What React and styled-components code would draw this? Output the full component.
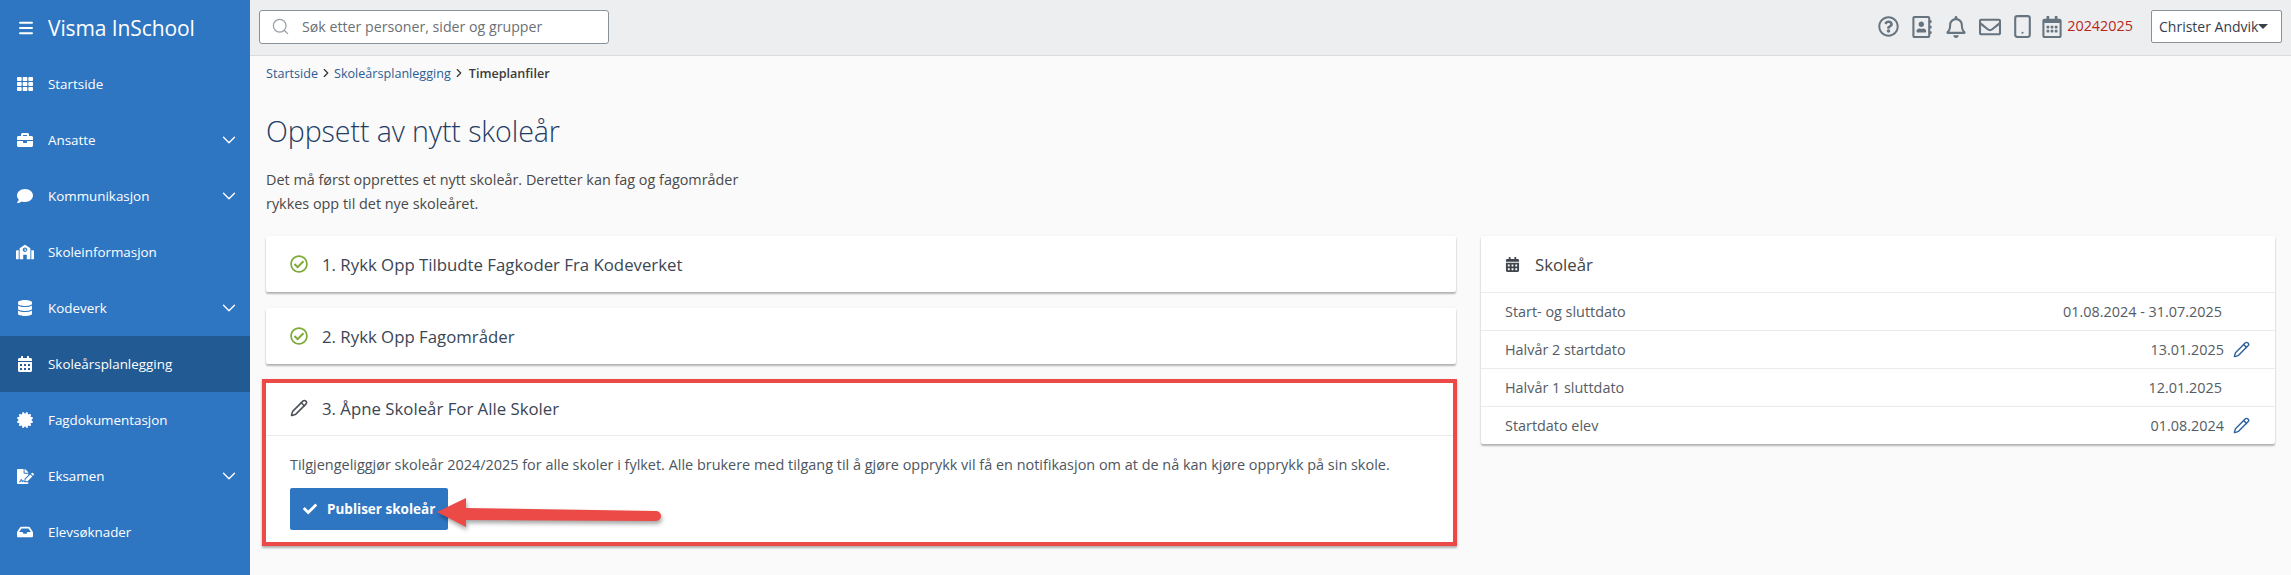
import React from "react";
import styled, { createGlobalStyle } from "styled-components";
import {
  FaTh, FaBriefcase, FaComment, FaDatabase, FaCalendarAlt, FaCertificate, FaFileSignature, FaInbox, FaSchool,
  FaRegQuestionCircle, FaRegAddressBook, FaRegBell, FaRegEnvelope, FaRegCalendarAlt, FaRegCheckCircle, FaCheck,
} from "react-icons/fa";
import { ChevronDown, ChevronRight, Menu, Search, Pencil, Smartphone } from "lucide-react";

const Global = createGlobalStyle`
  html, body { margin: 0; padding: 0; height: 100%; overflow: hidden; background: #fafafa; }
  body { font-family: "Open Sans", "Noto Sans", sans-serif; font-size: 14.4px; color: #494949; }
  * { box-sizing: border-box; }
`;

const Shell = styled.div`display: flex; width: 2291px; height: 575px; overflow: hidden;`;

const Sidebar = styled.nav`width: 250px; flex: none; background: #2f76c2; color: #fff;`;
const Brand = styled.div`
  height: 56px; display: flex; align-items: center; gap: 13px; padding-left: 17px;
  font-size: 21px; letter-spacing: -0.1px;
`;
const NavItem = styled.div`
  height: 56px; display: flex; align-items: center; position: relative; font-size: 13.4px;
  background: ${(p) => (p.$active ? "#225a94" : "transparent")};
`;
const NavIcon = styled.span`width: 48px; flex: none; display: flex; justify-content: center; padding-left: 2px; font-size: ${(p) => p.$s || 16}px;`;
const NavLabel = styled.span`flex: 1;`;
const NavChevron = styled.span`display: flex; width: 32px;`;

const Body = styled.div`flex: 1; min-width: 0; display: flex; flex-direction: column;`;
const Topbar = styled.header`
  height: 56px; flex: none; display: flex; align-items: center; background: #edeef0;
  border-bottom: 1px solid #d9dbdd; padding: 0 9px 2px 9px;
`;
const SearchBox = styled.div`
  width: 350px; height: 34px; background: #fff; border: 1px solid #8a9299; border-radius: 3px;
  display: flex; align-items: center; padding-left: 11px; gap: 12px; color: #6b7075; font-size: 14.2px;
`;
const TopIcons = styled.div`margin-left: auto; display: flex; align-items: center; color: #66747f;`;
const TopIcon = styled.span`display: flex; justify-content: center; width: ${(p) => p.$w || 34}px; font-size: ${(p) => p.$s || 22}px;`;
const YearText = styled.span`color: #b8271c; font-size: 14.4px; margin: 0 18px 0 0; line-height: 1;`;
const UserButton = styled.button`
  width: 131px; height: 33px; padding: 0 0 0 7px; background: #fff; border: 1px solid #8a9299; border-radius: 2px;
  font: 14px "Open Sans", sans-serif; color: #33404d; display: flex; align-items: center; white-space: nowrap;
`;
const Caret = styled.span`
  width: 0; height: 0; border-left: 5px solid transparent; border-right: 5px solid transparent;
  border-top: 5px solid #3a4048;
`;

const Main = styled.main`flex: 1; padding: 0 16px; background: #fafafa; min-height: 0;`;
const Crumbs = styled.div`
  display: flex; align-items: center; height: 16px; margin-top: 9px; font-size: 12.6px; color: #2d5c94;
`;
const CrumbSep = styled.span`display: flex; width: 15px; margin: 0 0 0 1px; color: #333;`;
const CrumbCurrent = styled.span`color: #3c3c3c; font-weight: 600; margin-left: 2px;`;
const Crumb = styled.span``;

const Title = styled.h1`
  margin: 30px 0 0; font-size: 28.6px; font-weight: 300; line-height: 40px; color: #1f3d66; letter-spacing: -0.1px;
`;
const Intro = styled.p`margin: 17px 0 0; font-size: 14.4px; line-height: 24px; color: #494949;`;

const Columns = styled.div`
  display: grid; grid-template-columns: 1190px 794px; column-gap: 25px; margin-top: 20px; align-items: start;
`;
const Stack = styled.div`display: flex; flex-direction: column;`;
const Card = styled.section`
  background: #fff; border-radius: 2px; box-shadow: 0 2px 2px rgba(0,0,0,.28), 0 0 3px rgba(0,0,0,.05);
  margin-bottom: ${(p) => p.$mb || 0}px;
`;
const HighlightCard = styled(Card)`
  position: relative; border: 4px solid #eb4a46; border-radius: 0; margin: -1px -1px 0 -4px; height: 167px;
`;
const CardHead = styled.div`
  display: flex; align-items: center; height: ${(p) => p.$h || 56}px; padding-left: ${(p) => p.$pl || 24}px;
  padding-bottom: ${(p) => (p.$line ? 2 : 0)}px;
  font-size: 16.8px; font-weight: 500; color: #3b4654; gap: ${(p) => p.$gap || 14}px;
  border-bottom: ${(p) => (p.$line ? "1px solid #ebebeb" : "0")};
`;
const CheckIcon = styled.span`display: flex; color: #7cab35; font-size: 18px; width: 18px;`;
const EditIcon = styled.span`display: flex; color: #4a4f55; width: 18px;`;
const CardBody = styled.div`padding: 19px 24px 0;`;
const BodyText = styled.p`margin: 0; font-size: 14.45px; line-height: 20px; color: #4c5560; white-space: nowrap;`;
const PublishButton = styled.button`
  margin-top: 13px; height: 42px; width: 158px; background: #2f76c2; color: #fff; border: 0; border-radius: 2px;
  font: 700 13.5px "Open Sans", sans-serif; display: flex; align-items: center; gap: 10px; padding-left: 13px;
`;
const Arrow = styled.svg`position: absolute; left: 164px; top: 106px; overflow: visible; filter: drop-shadow(1px 3px 2px rgba(0,0,0,.35));`;

const YearHead = styled(CardHead)`font-weight: 500; color: #444;`;
const YearIcon = styled.span`display: flex; color: #3e454d; font-size: 15px;`;
const Row = styled.div`
  height: 38px; display: flex; align-items: center; justify-content: space-between;
  padding: 0 25px 0 24px; font-size: 14.4px; color: #555c64; border-top: 1px solid #ebebeb;
`;
const RowValue = styled.span`display: flex; align-items: center; gap: 9px; margin-right: ${(p) => (p.$edit ? 0 : 28)}px;`;
const PenLink = styled.span`display: flex; color: #2d619e;`;

const nav = [
  [FaTh, "Startside"], [FaBriefcase, "Ansatte", true], [FaComment, "Kommunikasjon", true], [FaSchool, "Skoleinformasjon", false, false, 18],
  [FaDatabase, "Kodeverk", true], [FaCalendarAlt, "Skoleårsplanlegging", false, true], [FaCertificate, "Fagdokumentasjon"],
  [FaFileSignature, "Eksamen", true, false, 17], [FaInbox, "Elevsøknader"],
];
const rows = [
  ["Start- og sluttdato", "01.08.2024 - 31.07.2025", false],
  ["Halvår 2 startdato", "13.01.2025", true],
  ["Halvår 1 sluttdato", "12.01.2025", false],
  ["Startdato elev", "01.08.2024", true],
];

export default function App() {
  return (
    <Shell>
      <Global />
      <Sidebar>
        <Brand><Menu size={18} strokeWidth={2.6} />Visma InSchool</Brand>
        {nav.map(([Icon, label, more, active, s]) => (
          <NavItem key={label} $active={active}>
            <NavIcon $s={s}><Icon /></NavIcon>
            <NavLabel>{label}</NavLabel>
            {more && <NavChevron><ChevronDown size={22} strokeWidth={1.5} /></NavChevron>}
          </NavItem>
        ))}
      </Sidebar>
      <Body>
        <Topbar>
          <SearchBox><Search size={19} color="#9aa0a6" strokeWidth={1.6} />Søk etter personer, sider og grupper</SearchBox>
          <TopIcons>
            <TopIcon $s={21}><FaRegQuestionCircle /></TopIcon>
            <TopIcon><FaRegAddressBook /></TopIcon>
            <TopIcon><FaRegBell /></TopIcon>
            <TopIcon><FaRegEnvelope /></TopIcon>
            <TopIcon $w={30}><Smartphone size={25} strokeWidth={2} /></TopIcon>
            <TopIcon $w={30}><FaRegCalendarAlt /></TopIcon>
            <YearText>20242025</YearText>
            <UserButton>Christer Andvik<Caret /></UserButton>
          </TopIcons>
        </Topbar>
        <Main>
          <Crumbs>
            <Crumb>Startside</Crumb>
            <CrumbSep><ChevronRight size={14} strokeWidth={2} /></CrumbSep>
            <Crumb>Skoleårsplanlegging</Crumb>
            <CrumbSep><ChevronRight size={14} strokeWidth={2} /></CrumbSep>
            <CrumbCurrent>Timeplanfiler</CrumbCurrent>
          </Crumbs>
          <Title>Oppsett av nytt skoleår</Title>
          <Intro>Det må først opprettes et nytt skoleår. Deretter kan fag og fagområder<br />rykkes opp til det nye skoleåret.</Intro>
          <Columns>
            <Stack>
              <Card $mb={16}>
                <CardHead><CheckIcon><FaRegCheckCircle /></CheckIcon>1. Rykk Opp Tilbudte Fagkoder Fra Kodeverket</CardHead>
              </Card>
              <Card $mb={16}>
                <CardHead><CheckIcon><FaRegCheckCircle /></CheckIcon>2. Rykk Opp Fagområder</CardHead>
              </Card>
              <HighlightCard>
                <CardHead $h={53} $line><EditIcon><Pencil size={18} strokeWidth={2} /></EditIcon>3. Åpne Skoleår For Alle Skoler</CardHead>
                <CardBody>
                  <BodyText>Tilgjengeliggjør skoleår 2024/2025 for alle skoler i fylket. Alle brukere med tilgang til å gjøre opprykk vil få en notifikasjon om at de nå kan kjøre opprykk på sin skole.</BodyText>
                  <PublishButton><FaCheck size={14} />Publiser skoleår</PublishButton>
                </CardBody>
                <Arrow width="232" height="40" viewBox="0 0 232 40">
                  <path d="M7 23 L36 9 L36 19 L226 22 A5 5 0 0 1 226 32 L36 31 L36 38 Z" fill="#eb4a46" />
                </Arrow>
              </HighlightCard>
            </Stack>
            <Card>
              <YearHead $gap={15}><YearIcon><FaCalendarAlt /></YearIcon>Skoleår</YearHead>
              {rows.map(([label, value, edit]) => (
                <Row key={label}>
                  <span>{label}</span>
                  <RowValue $edit={edit}>
                    {value}
                    {edit && <PenLink><Pencil size={17} strokeWidth={2} /></PenLink>}
                  </RowValue>
                </Row>
              ))}
            </Card>
          </Columns>
        </Main>
      </Body>
    </Shell>
  );
}
